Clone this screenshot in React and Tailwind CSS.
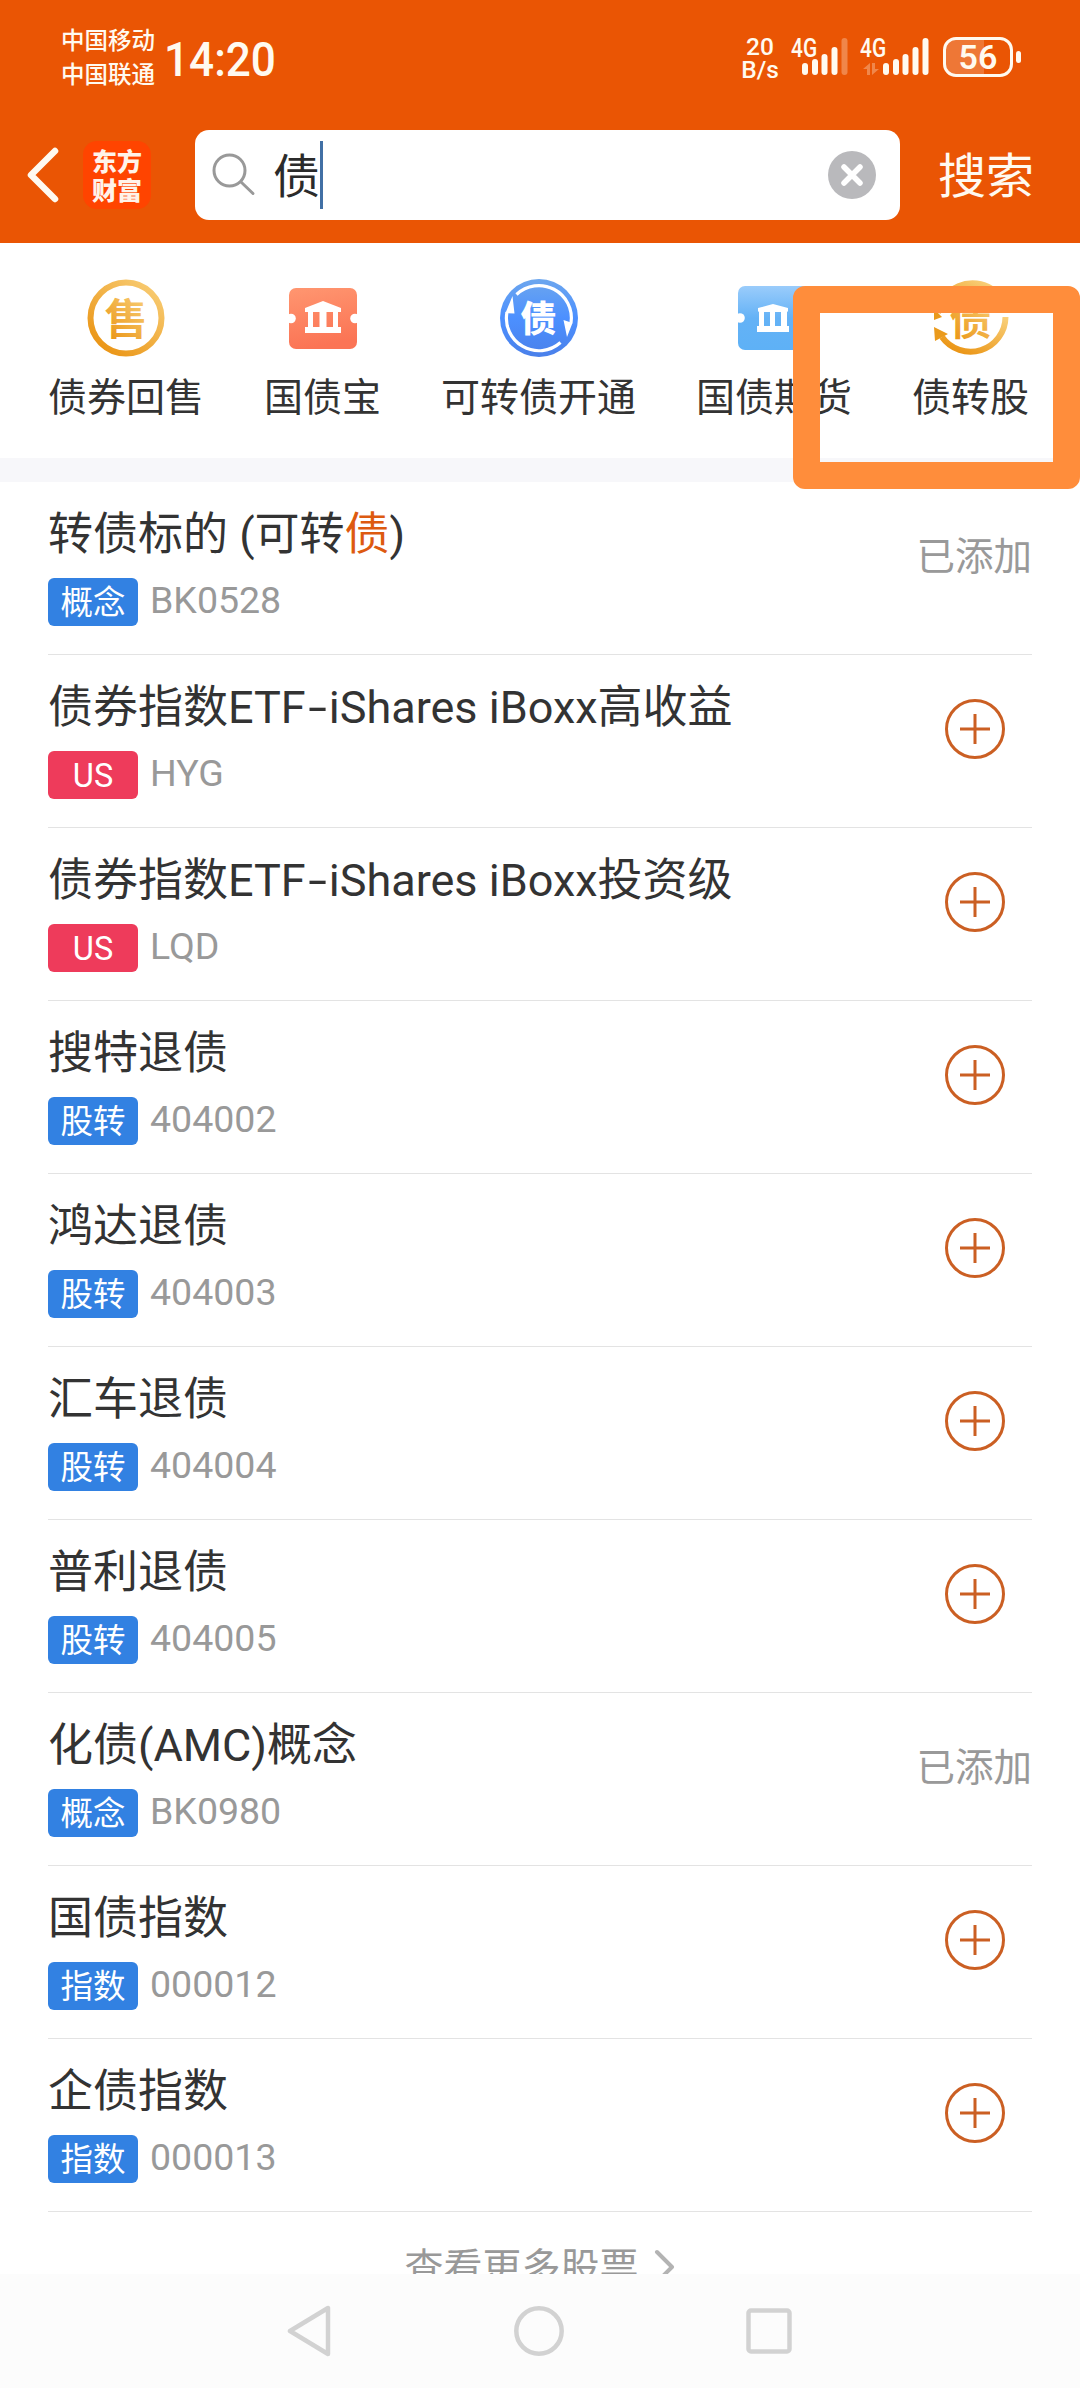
import React from "react";

/* ===== DATA ===== */
const stocks = [
    { name: "转债标的 (可转债)", tag: "概念", code: "BK0528", added: true, highlight: true },
    { name: "债券指数ETF-iShares iBoxx高收益", tag: "US", code: "HYG" },
    { name: "债券指数ETF-iShares iBoxx投资级", tag: "US", code: "LQD" },
    { name: "搜特退债", tag: "股转", code: "404002" },
    { name: "鸿达退债", tag: "股转", code: "404003" },
    { name: "汇车退债", tag: "股转", code: "404004" },
    { name: "普利退债", tag: "股转", code: "404005" },
    { name: "化债(AMC)概念", tag: "概念", code: "BK0980", added: true },
    { name: "国债指数", tag: "指数", code: "000012" },
    { name: "企债指数", tag: "指数", code: "000013" },
];

/* ===== ICONS ===== */
const SellIcon = () => (
    <svg width="78" height="78" viewBox="0 0 78 78">
        <defs>
            <linearGradient id="gold" x1="1" y1="0" x2="0.15" y2="1">
                <stop offset="0" stopColor="#f9d07a" />
                <stop offset="1" stopColor="#ea9312" />
            </linearGradient>
        </defs>
        <circle cx="39" cy="39" r="35.5" fill="none" stroke="url(#gold)" strokeWidth="6" />
        <text x="39" y="56" textAnchor="middle" fontSize="43" fontWeight="700" fill="url(#gold)">售</text>
    </svg>
);

const TicketIcon = () => (
    <svg width="70" height="78" viewBox="0 0 70 78">
        <defs>
            <linearGradient id="coral" x1="0" y1="0" x2="0.2" y2="1">
                <stop offset="0" stopColor="#ff9670" />
                <stop offset="1" stopColor="#fb7455" />
            </linearGradient>
        </defs>
        <rect x="1" y="9" width="68" height="61" rx="7" fill="url(#coral)" />
        <g fill="#fff">
            <circle cx="3" cy="39.500" r="4.800" />
            <circle cx="67" cy="39.500" r="4.800" />
            <path d="M17 33 V29 L35 22 L53 29 V33 Z" />
            <path d="M20 32 h5 V50 h-5 Z M31.500 32 h7 V50 h-7 Z M45 32 h5 V50 h-5 Z" />
            <rect x="17" y="48" width="36" height="6" />
        </g>
    </svg>
);

const OpenIcon = () => (
    <svg width="78" height="78" viewBox="0 0 78 78">
        <defs>
            <linearGradient id="blue" x1="0" y1="0" x2="0" y2="1">
                <stop offset="0" stopColor="#6ca6ee" />
                <stop offset="0.5" stopColor="#4c90ff" />
                <stop offset="1" stopColor="#4a80ea" />
            </linearGradient>
        </defs>
        <circle cx="39" cy="39" r="39" fill="url(#blue)" />
        <g fill="none" stroke="#fff" strokeWidth="3.2">
            <path d="M16.500 15.500 A32.500 32.500 0 0 1 71 44" />
            <path d="M60.500 63.500 A32.500 32.500 0 0 1 7 33" />
        </g>
        <path d="M63.500 41 L72.500 44 L67 58 Z M14.500 34.500 L5.500 34 L12.500 17 Z" fill="#fff" />
        <text x="38.500" y="53" textAnchor="middle" fontSize="36" fontWeight="900" fill="#fff">债</text>
    </svg>
);

const FuturesIcon = () => (
    <svg width="74" height="78" viewBox="0 0 74 78">
        <defs>
            <linearGradient id="sky" x1="0" y1="0" x2="0" y2="1">
                <stop offset="0" stopColor="#9accfb" />
                <stop offset="0.5" stopColor="#64b2f6" />
                <stop offset="1" stopColor="#5eb1f6" />
            </linearGradient>
        </defs>
        <rect x="1" y="7" width="72" height="64" rx="7" fill="url(#sky)" />
        <g fill="#fff">
            <circle cx="3" cy="39" r="4.800" />
            <circle cx="71" cy="39" r="4.800" />
            <path d="M21 32 V29 L36 25 L51 29 V32 Q51 33 49 33 H23 Q21 33 21 32 Z" />
            <path d="M22 32 h5 V49 h-5 Z M33 32 h5 V49 h-5 Z M44 32 h6 V49 h-6 Z" />
            <rect x="20" y="47" width="32" height="6" />
        </g>
    </svg>
);

const SwapIcon = () => (
    <svg width="78" height="78" viewBox="0 0 78 78">
        <g fill="none" stroke="url(#gold)" strokeWidth="6">
            <path d="M6 34 A35 35 0 0 1 60 10" />
            <path d="M73.500 38 A35 35 0 0 1 10 58" />
        </g>
        <path d="M2 48 L16 55 L3 62 Z M2 41 V30 L10 38 Z" fill="#ea9a1c" />
        <text x="38.500" y="56" textAnchor="middle" fontSize="42" fontWeight="700" fill="url(#gold)">债</text>
    </svg>
);

const shortcuts = [
    { label: "债券回售", icon: <SellIcon /> },
    { label: "国债宝", icon: <TicketIcon /> },
    { label: "可转债开通", icon: <OpenIcon /> },
    { label: "国债期货", icon: <FuturesIcon /> },
    { label: "债转股", icon: <SwapIcon /> },
];

const Signal = ({ weak }) => (
    <svg width="46" height="37" viewBox="0 0 46 37" fill="currentColor">
        <rect x="0" y="25" width="6" height="12" rx="3" />
        <rect x="10" y="21" width="6" height="16" rx="3" />
        <rect x="19.500" y="16" width="6" height="21" rx="3" />
        <rect x="29.500" y="9" width="6" height="28" rx="3" />
        <rect x="39.500" y="0" width="6" height="37" rx="3" opacity={weak ? 0.3 : 1} />
    </svg>
);

const StatusBar = () => (
    <div className="flex h-[113px] items-center pl-[61px] pr-[59px] text-[#fffaf0]">
        <div className="mt-[2px] text-[23.5px] font-medium leading-[34px]">
            <p>中国移动</p>
            <p>中国联通</p>
        </div>
        <p className="ml-[9px] mt-[5px] origin-left scale-x-[0.9] font-[Roboto] text-[49px] font-medium leading-none">14:20</p>

        <div className="ml-auto flex items-center font-[Roboto]">
            <div className="mt-[3px] w-[38px] text-center text-[24.5px] font-medium leading-[23.5px]">
                <p>20</p>
                <p>B/s</p>
            </div>
            <div className="relative ml-[23px]">
                <Signal weak />
                <span className="absolute -left-[11px] -top-[2px] origin-left scale-x-[0.82] text-[25.5px] font-medium leading-none">4G</span>
            </div>
            <div className="relative ml-[35px]">
                <Signal />
                <span className="absolute -left-[23px] -top-[2px] origin-left scale-x-[0.82] text-[25.5px] font-medium leading-none">4G</span>
                <svg className="absolute -left-[20px] bottom-0 opacity-30" width="16" height="12" viewBox="0 0 16 12" fill="currentColor">
                    <path d="M7 0 V12 H4 V6 H0 Z M9 0 V12 L16 6 H12 V0 Z" />
                </svg>
            </div>
            <div className="relative ml-[14px] flex h-[40px] w-[70px] items-center justify-center overflow-hidden rounded-[13px] border-[3.5px] border-current">
                <span className="absolute inset-y-0 left-0 w-[38px] bg-white/20" />
                <span className="relative text-[34px] font-semibold leading-none">56</span>
            </div>
            <span className="ml-[3px] h-[12px] w-[5px] rounded-full bg-current" />
        </div>
    </div>
);

const SearchBar = () => (
    <div className="flex h-[130px] items-center pb-[6px] pl-[26px]">
        <svg width="34" height="58" viewBox="0 0 34 58" fill="none" stroke="#fffaf0" strokeWidth="6.500" strokeLinecap="round" strokeLinejoin="round">
            <path d="M29 5 L5 29 L29 53" />
        </svg>
        <div className="ml-[23px] flex h-[68px] w-[68px] flex-col items-center justify-center rounded-[14px] bg-[#ff4400] pt-[3px] text-[25px] font-black leading-[29px] text-[#fff3ea]">
            <p>东方</p>
            <p>财富</p>
        </div>

        <div className="ml-[44px] flex h-[90px] w-[705px] items-center rounded-[14px] bg-white pl-[17px] pr-[24px]">
            <svg width="44" height="44" viewBox="0 0 44 44" fill="none" stroke="#999" strokeWidth="3" strokeLinecap="round">
                <circle cx="17.500" cy="17.500" r="15.500" />
                <path d="M29 29 L41 40.500" />
            </svg>
            <span className="ml-[17px] mt-[3px] text-[47px] leading-none text-[#2b2b2b]">债</span>
            <span className="h-[68px] w-[3px] bg-[#4170a5]" />
            <svg className="ml-auto" width="48" height="48" viewBox="0 0 48 48">
                <circle cx="24" cy="24" r="24" fill="#b9b9bc" />
                <path d="M16 16 L32 32 M32 16 L16 32" stroke="#fff" strokeWidth="5.500" strokeLinecap="round" />
            </svg>
        </div>
        <button className="ml-[38px] mt-[3px] text-[48px] leading-none text-[#fffaf0]">搜索</button>
    </div>
);

const StockName = ({ stock }) => {
    if (stock.highlight) {
        return (
            <>
                转债标的 (可转<span className="text-[#dd5a10]">债</span>)
            </>
        );
    }
    // the dash in fund names is drawn wider than the font's own hyphen
    const [head, tail] = stock.name.split("-");
    if (!tail) return head;
    return (
        <>
            {head}
            <span className="inline-block w-[23px] scale-x-150 text-center">-</span>
            {tail}
        </>
    );
};

const StockRow = ({ stock }) => (
    <li className="flex h-[173px] justify-between border-b border-[#e3e3e3]">
        <div className="pt-[26px]">
            <h3 className="whitespace-nowrap text-[45px] leading-[54px] text-[#333]">
                <StockName stock={stock} />
            </h3>
            <div className="mt-[16px] flex h-[48px] items-center">
                <span
                    className={`flex h-[48px] w-[90px] items-center justify-center rounded-[6px] pt-[2px] text-[32.5px] leading-none text-white ${
                        stock.tag === "US" ? "bg-[#ee3b5b]" : "bg-[#3281e2]"
                    }`}
                >
                    {stock.tag}
                </span>
                <span className="mb-[2px] ml-[12px] text-[37.5px] leading-none text-[#999]">{stock.code}</span>
            </div>
        </div>
        <div className="flex h-[148px] items-center">
            {stock.added ? (
                <span className="mt-[3px] text-[38.5px] leading-none text-[#999]">已添加</span>
            ) : (
                <svg className="mr-[27px]" width="60" height="60" viewBox="0 0 60 60" fill="none" stroke="#cb5f23" strokeWidth="3">
                    <circle cx="30" cy="30" r="28.500" />
                    <path d="M30 15 V45 M15 30 H45" />
                </svg>
            )}
        </div>
    </li>
);

const App = () => {
    return (
        <div className="flex h-[2388px] w-[1080px] flex-col overflow-hidden bg-white font-['Roboto','Noto_Sans_CJK_SC',sans-serif]">
            {/* HEADER */}
            <header className="shrink-0 bg-[#ea5504]">
                <StatusBar />
                <SearchBar />
            </header>

            {/* SHORTCUTS */}
            <section className="relative flex h-[239px] shrink-0 gap-[60px] border-b-[24px] border-[#f7f7fa] pl-[48px] pt-[36px]">
                {shortcuts.map((s) => (
                    <div key={s.label} className="flex flex-col items-center">
                        {s.icon}
                        <span className="mt-[16px] whitespace-nowrap text-[39px] leading-[50px] text-[#333]">{s.label}</span>
                    </div>
                ))}
                {/* marker frame around the last shortcut */}
                <div className="absolute left-[793px] top-[43px] h-[203px] w-[287px] rounded-[12px] border-[27px] border-[#ff8d3b]" />
            </section>

            {/* RESULTS */}
            <main className="min-h-0 flex-1 overflow-hidden">
                <ul className="mx-12">
                    {stocks.map((stock) => (
                        <StockRow key={stock.code} stock={stock} />
                    ))}
                </ul>
                <div className="flex items-start justify-center gap-[15px] pt-[36px] text-[#999]">
                    <span className="text-[39px] leading-[40px]">查看更多股票</span>
                    <svg className="mt-[1px]" width="22" height="36" viewBox="0 0 22 36" fill="none" stroke="#b3b3b3" strokeWidth="4" strokeLinecap="round" strokeLinejoin="round">
                        <path d="M3 3 L18 18 L3 33" />
                    </svg>
                </div>
            </main>

            {/* SYSTEM NAVIGATION */}
            <nav className="flex h-[114px] shrink-0 items-center justify-between bg-[#fcfcfc] pl-[286px] pr-[288px]">
                <svg width="46" height="52" viewBox="0 0 46 52" fill="none" stroke="#d2d2d2" strokeWidth="4.500" strokeLinejoin="round">
                    <path d="M42 3 V49 L4 26 Z" />
                </svg>
                <svg width="50" height="50" viewBox="0 0 50 50" fill="none" stroke="#d2d2d2" strokeWidth="4.500">
                    <circle cx="25" cy="25" r="22.700" />
                </svg>
                <svg width="46" height="46" viewBox="0 0 46 46" fill="none" stroke="#d2d2d2" strokeWidth="4.500">
                    <rect x="2.500" y="2.500" width="41" height="41" rx="2.500" />
                </svg>
            </nav>
        </div>
    );
};

export default App;
